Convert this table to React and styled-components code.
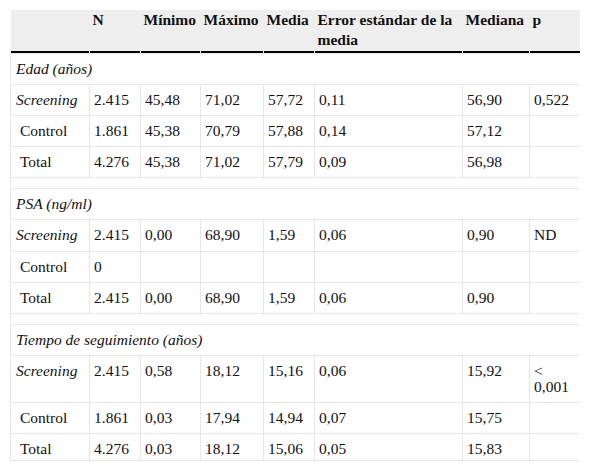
import React from "react";
import styled, {createGlobalStyle} from "styled-components";

const GlobalStyle = createGlobalStyle`
  body {
    margin: 0;
    background: #fff;
    font-family: "Liberation Serif", "Times New Roman", serif;
    color: #111;
  }
`;

const Page = styled.div`
  padding: 10px 10px 0 10px;
`;

const Frame = styled.div`
  width: 570px;
  height: 450px;
  overflow: hidden;
  border-bottom: 1px solid #e4e4e4;
`;

const Table = styled.table`
  width: 570px;
  table-layout: fixed;
  border-collapse: collapse;
  font-size: 15.5px;
  line-height: 16.1px;
`;

// underline drawn as a background strip, leaving a 1px gap at the right of each cell
const HeadCell = styled.th`
  background: linear-gradient(#000, #000) left bottom / calc(100% - 1px) 2px no-repeat, #eeeeee;
  text-align: left;
  vertical-align: top;
  font-weight: bold;
  padding: 0 3px 3px 3px;
  line-height: 20px;
`;

const Cell = styled.td`
  border: 1px solid #e6e6e6;
  padding: 7px 4px;
  vertical-align: top;
  font-style: ${props => props.italic ? 'italic' : 'normal'};

  &:first-child {
    padding-left: 5px;
  }
`;

const SectionCell = styled(Cell)`
  font-style: italic;
`;

const SpacerCell = styled.td`
  border: 1px solid #e6e6e6;
  height: 10px;
  padding: 0;
`;

const columns = [
    {label: '', width: 79},
    {label: 'N', width: 51},
    {label: 'Mínimo', width: 60},
    {label: 'Máximo', width: 63},
    {label: 'Media', width: 51},
    {label: 'Error estándar de la media', width: 148},
    {label: 'Mediana', width: 67},
    {label: 'p', width: 51}
];

const sections = [
    {
        title: 'Edad (años)',
        rows: [
            ['Screening', '2.415', '45,48', '71,02', '57,72', '0,11', '56,90', '0,522'],
            ['\u00a0Control', '1.861', '45,38', '70,79', '57,88', '0,14', '57,12', ''],
            ['\u00a0Total', '4.276', '45,38', '71,02', '57,79', '0,09', '56,98', '']
        ]
    },
    {
        title: 'PSA (ng/ml)',
        rows: [
            ['Screening', '2.415', '0,00', '68,90', '1,59', '0,06', '0,90', 'ND'],
            ['\u00a0Control', '0', '', '', '', '', '', ''],
            ['\u00a0Total', '2.415', '0,00', '68,90', '1,59', '0,06', '0,90', '']
        ]
    },
    {
        title: 'Tiempo de seguimiento (años)',
        rows: [
            ['Screening', '2.415', '0,58', '18,12', '15,16', '0,06', '15,92', '< 0,001'],
            ['\u00a0Control', '1.861', '0,03', '17,94', '14,94', '0,07', '15,75', ''],
            ['\u00a0Total', '4.276', '0,03', '18,12', '15,06', '0,05', '15,83', '']
        ]
    }
];

export default function App() {
    return (
        <Page>
            <GlobalStyle/>
            <Frame>
                <Table>
                    <colgroup>
                        {columns.map((col, i) => <col key={i} style={{width: col.width}}/>)}
                    </colgroup>
                    <thead>
                    <tr>
                        {columns.map((col, i) => <HeadCell key={i}>{col.label}</HeadCell>)}
                    </tr>
                    </thead>
                    <tbody>
                    {sections.map((section, s) => (
                        <React.Fragment key={section.title}>
                            {s > 0 && <tr><SpacerCell colSpan={8}/></tr>}
                            <tr><SectionCell colSpan={8}>{section.title}</SectionCell></tr>
                            {section.rows.map(row => (
                                <tr key={row[0]}>
                                    {row.map((value, c) => (
                                        <Cell key={c} italic={c === 0 && value === 'Screening'}>{value}</Cell>
                                    ))}
                                </tr>
                            ))}
                        </React.Fragment>
                    ))}
                    </tbody>
                </Table>
            </Frame>
        </Page>
    );
}
